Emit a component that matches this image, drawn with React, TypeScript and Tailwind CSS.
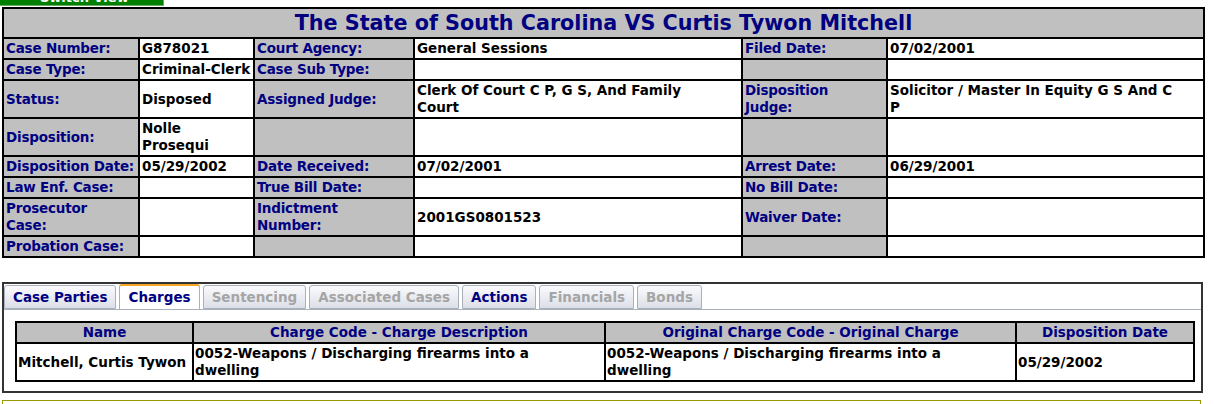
const font = { fontFamily: '"DejaVu Sans", Verdana, sans-serif' };

type Cell = { label?: string; value?: string };

// line breaks follow the original page's wrapping
const rows: Cell[][] = [
  [
    { label: "Case Number:" }, { value: "G878021" },
    { label: "Court Agency:" }, { value: "General Sessions" },
    { label: "Filed Date:" }, { value: "07/02/2001" },
  ],
  [
    { label: "Case Type:" }, { value: "Criminal-Clerk" },
    { label: "Case Sub Type:" }, { value: "" },
    { label: "" }, { value: "" },
  ],
  [
    { label: "Status:" }, { value: "Disposed" },
    { label: "Assigned Judge:" }, { value: "Clerk Of Court C P, G S, And Family\nCourt" },
    { label: "Disposition\nJudge:" }, { value: "Solicitor / Master In Equity G S And C\nP" },
  ],
  [
    { label: "Disposition:" }, { value: "Nolle\nProsequi" },
    { label: "" }, { value: "" },
    { label: "" }, { value: "" },
  ],
  [
    { label: "Disposition Date:" }, { value: "05/29/2002" },
    { label: "Date Received:" }, { value: "07/02/2001" },
    { label: "Arrest Date:" }, { value: "06/29/2001" },
  ],
  [
    { label: "Law Enf. Case:" }, { value: "" },
    { label: "True Bill Date:" }, { value: "" },
    { label: "No Bill Date:" }, { value: "" },
  ],
  [
    { label: "Prosecutor\nCase:" }, { value: "" },
    { label: "Indictment\nNumber:" }, { value: "2001GS0801523" },
    { label: "Waiver Date:" }, { value: "" },
  ],
  [
    { label: "Probation Case:" }, { value: "" },
    { label: "" }, { value: "" },
    { label: "" }, { value: "" },
  ],
];

const tabs = [
  { name: "Case Parties", state: "on" },
  { name: "Charges", state: "active" },
  { name: "Sentencing", state: "off" },
  { name: "Associated Cases", state: "off" },
  { name: "Actions", state: "on" },
  { name: "Financials", state: "off" },
  { name: "Bonds", state: "off" },
];

function Tab({ name, state }: { name: string; state: string }) {
  if (state === "active") {
    return (
      <div className="h-[25px] px-[8px] border border-[#a8b0bc] border-b-0 border-t-[2px] border-t-[#f5a623] rounded-t-[3px] bg-white text-[#000080] text-[13.5px] font-bold leading-[22px]">
        {name}
      </div>
    );
  }
  return (
    <div
      className={
        "h-[24px] mt-[1px] px-[8px] border border-[#a8b0bc] rounded-t-[3px] bg-gradient-to-b from-[#fbfbfd] to-[#dcdfe8] text-[13.5px] font-bold leading-[22px] " +
        (state === "on" ? "text-[#000080]" : "text-[#a5a5a5]")
      }
    >
      {name}
    </div>
  );
}

export default function App() {
  return (
    <div className="bg-white w-[1214px] h-[404px] overflow-hidden" style={font}>
      <div className="w-[164px] h-[6px] overflow-hidden bg-[#008000] border-r border-b border-[#66aa66]">
        <div className="-mt-[10px] pl-[40px] text-white text-[13px] font-bold leading-[16px]">Switch View</div>
      </div>

      <table className="ml-[2px] mt-[1px] w-[1201px] border-collapse table-fixed border-2 border-black text-[13.5px] font-bold">
        <colgroup>
          <col className="w-[136px]" />
          <col className="w-[115px]" />
          <col className="w-[160px]" />
          <col className="w-[328px]" />
          <col className="w-[145px]" />
          <col className="w-[317px]" />
        </colgroup>
        <tbody>
          <tr>
            <td colSpan={6} className="h-[30px] bg-[#c0c0c0] border-2 border-black text-center text-[#000080] text-[20.7px] leading-[26px]">
              The State of South Carolina VS Curtis Tywon Mitchell
            </td>
          </tr>
          {rows.map((r, i) => (
            <tr key={i}>
              {r.map((c, j) =>
                c.label !== undefined ? (
                  <td
                    key={j}
                    className="bg-[#c0c0c0] border-2 border-black pl-[2px] pr-0 py-[1px] leading-[17px] text-[#000080] align-middle whitespace-pre-line tracking-[-0.2px]"
                  >
                    {c.label}
                  </td>
                ) : (
                  <td key={j} className="bg-white border-2 border-black px-[2px] py-[1px] leading-[17px] text-black align-middle whitespace-pre-line">
                    {c.value}
                  </td>
                )
              )}
            </tr>
          ))}
        </tbody>
      </table>

      <div className="ml-[2px] mt-[24px] w-[1201px] border-2 border-[#333] bg-white">
        <div className="flex gap-[3px] pl-0 pt-0 border-b border-[#a8b0bc]">
          {tabs.map((t) => (
            <Tab key={t.name} name={t.name} state={t.state} />
          ))}
        </div>
        <div className="px-[11px] pt-[11px] pb-[9px]">
          <table className="w-[1178px] border-collapse table-fixed border-2 border-black text-[13.5px] font-bold">
            <colgroup>
              <col className="w-[177px]" />
              <col className="w-[412px]" />
              <col className="w-[411px]" />
              <col className="w-[178px]" />
            </colgroup>
            <thead>
              <tr>
                {["Name", "Charge Code - Charge Description", "Original Charge Code - Original Charge", "Disposition Date"].map((h) => (
                  <th key={h} className="bg-[#c0c0c0] border-2 border-black text-[#000080] leading-[17px] py-[1px] text-center">
                    {h}
                  </th>
                ))}
              </tr>
            </thead>
            <tbody>
              <tr>
                <td className="border-2 border-black px-[1px] py-[1px] leading-[17px] align-middle whitespace-nowrap">Mitchell, Curtis Tywon</td>
                <td className="border-2 border-black px-[1px] py-[1px] leading-[17px] align-middle">
                  0052-Weapons / Discharging firearms into a<br />dwelling
                </td>
                <td className="border-2 border-black px-[1px] py-[1px] leading-[17px] align-middle">
                  0052-Weapons / Discharging firearms into a<br />dwelling
                </td>
                <td className="border-2 border-black px-[1px] py-[1px] leading-[17px] align-middle">05/29/2002</td>
              </tr>
            </tbody>
          </table>
        </div>
      </div>

      <div className="ml-[2px] mt-[7px] w-[1199px] h-[20px] border border-[#999900] bg-white" />
    </div>
  );
}
